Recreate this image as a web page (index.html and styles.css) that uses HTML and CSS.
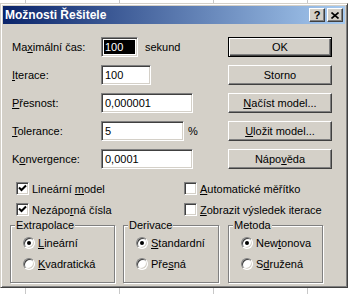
FILE: index.html
```html
<!DOCTYPE html>
<html>
<head>
  <meta charset="utf-8">
  <title>Možnosti Řešitele</title>
  <link rel="stylesheet" href="styles.css">
</head>
<body>
  <div class="dialog">
    <div class="titlebar">
      <span class="title">Možnosti Řešitele</span>
      <span class="cap-btn help">?</span>
      <span class="cap-btn close">
        <svg width="8" height="7" viewBox="0 0 8 7"><path d="M0.5 0.5 L7.5 6.5 M7.5 0.5 L0.5 6.5" stroke="#000" stroke-width="1.6" fill="none"/></svg>
      </span>
    </div>

    <div class="client">
      <div class="top">
        <!-- Parametry -->
        <div class="fields">
          <div class="row">
            <label>Ma<u>x</u>imální čas:</label>
            <span class="edit selected w-time"><span class="sel">100</span></span>
            <span class="unit">sekund</span>
          </div>
          <div class="row">
            <label><u>I</u>terace:</label>
            <span class="edit w-iter">100</span>
          </div>
          <div class="row">
            <label><u>P</u>řesnost:</label>
            <span class="edit w-long">0,000001</span>
          </div>
          <div class="row">
            <label><u>T</u>olerance:</label>
            <span class="edit w-tol">5</span>
            <span class="unit pct">%</span>
          </div>
          <div class="row">
            <label>K<u>o</u>nvergence:</label>
            <span class="edit w-long">0,0001</span>
          </div>
        </div>

        <!-- Tlačítka -->
        <div class="buttons">
          <button class="btn default">OK</button>
          <button class="btn">Storno</button>
          <button class="btn"><u>N</u>ačíst model...</button>
          <button class="btn"><u>U</u>ložit model...</button>
          <button class="btn">Nápo<u>v</u>ěda</button>
        </div>
      </div>

      <div class="checks">
        <div class="check"><span class="box on"><svg width="9" height="9" viewBox="0 0 9 9"><path d="M1 3.5 L3.5 6 L8 1.5" stroke="#000" stroke-width="2" fill="none"/></svg></span><span>Lineární <u>m</u>odel</span></div>
        <div class="check"><span class="box"></span><span><u>A</u>utomatické měřítko</span></div>
        <div class="check"><span class="box on"><svg width="9" height="9" viewBox="0 0 9 9"><path d="M1 3.5 L3.5 6 L8 1.5" stroke="#000" stroke-width="2" fill="none"/></svg></span><span>Nezápo<u>r</u>ná čísla</span></div>
        <div class="check"><span class="box"></span><span><u>Z</u>obrazit výsledek iterace</span></div>
      </div>

      <div class="groups">
        <fieldset class="group g-extra">
          <legend>Extrapolace</legend>
          <div class="opts">
            <div class="opt"><span class="radio on"></span><span><u>L</u>ineární</span></div>
            <div class="opt"><span class="radio"></span><span><u>K</u>vadratická</span></div>
          </div>
        </fieldset>
        <fieldset class="group g-deriv">
          <legend>Derivace</legend>
          <div class="opts">
            <div class="opt"><span class="radio on"></span><span><u>S</u>tandardní</span></div>
            <div class="opt"><span class="radio"></span><span>Pře<u>s</u>ná</span></div>
          </div>
        </fieldset>
        <fieldset class="group g-method">
          <legend>Metoda</legend>
          <div class="opts">
            <div class="opt"><span class="radio on"></span><span>New<u>t</u>onova</span></div>
            <div class="opt"><span class="radio"></span><span>S<u>d</u>ružená</span></div>
          </div>
        </fieldset>
      </div>
    </div>
  </div>
</body>
</html>
```

FILE: styles.css
```css
* {
  box-sizing: border-box;
}

body {
  margin: 0;
  width: 350px;
  height: 294px;
  overflow: hidden;
  font-family: "Liberation Sans", Arial, sans-serif;
  font-size: 11px;
  color: #000;
  background: #fff repeating-linear-gradient(90deg, transparent 0 25px, #c8c8c8 25px 26px, transparent 26px 94px);
}

.dialog {
  margin-top: 3px;
  width: 348px;
  height: 285px;
  padding: 2px;
  background-color: #d4d0c8;
  border: 1px solid;
  border-color: #d4d0c8 #404040 #404040 #d4d0c8;
  box-shadow: inset 1px 1px #fff, inset -1px -1px #808080;
}

.titlebar {
  display: flex;
  align-items: center;
  height: 18px;
  padding: 0 2px 0 2px;
  background: linear-gradient(90deg, #0a246a, #a6caf0);
}

.title {
  flex: 1;
  color: #fff;
  font-weight: bold;
  font-size: 12px;
}

.cap-btn {
  display: flex;
  align-items: center;
  justify-content: center;
  width: 16px;
  height: 14px;
  background-color: #d4d0c8;
  border: 1px solid;
  border-color: #fff #404040 #404040 #fff;
  box-shadow: inset -1px -1px #808080;
  font-weight: bold;
  font-size: 11px;
  line-height: 1;
}

.cap-btn.help {
  margin-right: 2px;
}

.client {
  padding: 13px 0 0 9px;
}

.top {
  display: flex;
}

.fields {
  width: 216px;
  display: flex;
  flex-direction: column;
  gap: 8px;
}

.row {
  display: flex;
  align-items: center;
  height: 20px;
}

.row label {
  width: 89px;
}

.edit {
  display: flex;
  align-items: center;
  height: 20px;
  padding-left: 3px;
  background-color: #fff;
  border: 1px solid;
  border-color: #808080 #fff #fff #808080;
  box-shadow: inset 1px 1px #404040, inset -1px -1px #d4d0c8;
}

.edit.selected {
  padding: 2px;
}

.sel {
  flex: 1;
  align-self: stretch;
  display: flex;
  align-items: center;
  padding-left: 1px;
  background-color: #000;
  color: #fff;
}

.w-time { width: 37px; }
.w-iter { width: 50px; }
.w-long { width: 92px; }
.w-tol { width: 83px; }

.unit {
  margin-left: 7px;
}

.unit.pct {
  margin-left: 4px;
}

.buttons {
  width: 104px;
  display: flex;
  flex-direction: column;
  gap: 8px;
}

.btn {
  height: 20px;
  padding: 0;
  font-family: inherit;
  font-size: 11px;
  color: #000;
  background-color: #d4d0c8;
  border: 1px solid;
  border-color: #fff #404040 #404040 #fff;
  box-shadow: inset -1px -1px #808080;
}

.btn.default {
  border: 1px solid #000;
  box-shadow: inset 1px 1px #fff, inset -1px -1px #404040, inset -2px -2px #808080;
}

.checks {
  display: grid;
  grid-template-columns: 168px auto;
  row-gap: 4px;
  margin-top: 11px;
  padding-left: 4px;
}

.check {
  display: flex;
  align-items: center;
  gap: 3px;
  height: 17px;
}

.box {
  display: flex;
  align-items: center;
  justify-content: center;
  width: 13px;
  height: 13px;
  background-color: #fff;
  border: 1px solid;
  border-color: #808080 #fff #fff #808080;
  box-shadow: inset 1px 1px #404040, inset -1px -1px #d4d0c8;
}

.groups {
  display: flex;
  gap: 8px;
  margin: 1px 0 0 -2px;
}

.group {
  height: 64px;
  margin: 0;
  padding: 0;
  border: 1px solid #808080;
  box-shadow: 1px 1px 0 #fff, inset 1px 1px 0 #fff;
}

.group legend {
  margin-left: 4px;
  padding: 0 1px;
  line-height: 13px;
  background-color: #d4d0c8;
}

.g-extra { width: 105px; }
.g-deriv { width: 96px; }
.g-method { width: 95px; margin-left: 1px; }

.opts {
  display: flex;
  flex-direction: column;
  gap: 5px;
  padding: 3px 0 0 12px;
}

.opt {
  display: flex;
  align-items: center;
  gap: 3px;
  height: 16px;
}

.radio {
  display: flex;
  align-items: center;
  justify-content: center;
  width: 12px;
  height: 12px;
  border-radius: 50%;
  background-color: #fff;
  border: 1px solid;
  border-color: #808080 #fff #fff #808080;
  box-shadow: inset 1px 1px #404040, inset -1px -1px #d4d0c8;
}

.radio.on::after {
  content: "";
  width: 4px;
  height: 4px;
  border-radius: 50%;
  background-color: #000;
}
```
